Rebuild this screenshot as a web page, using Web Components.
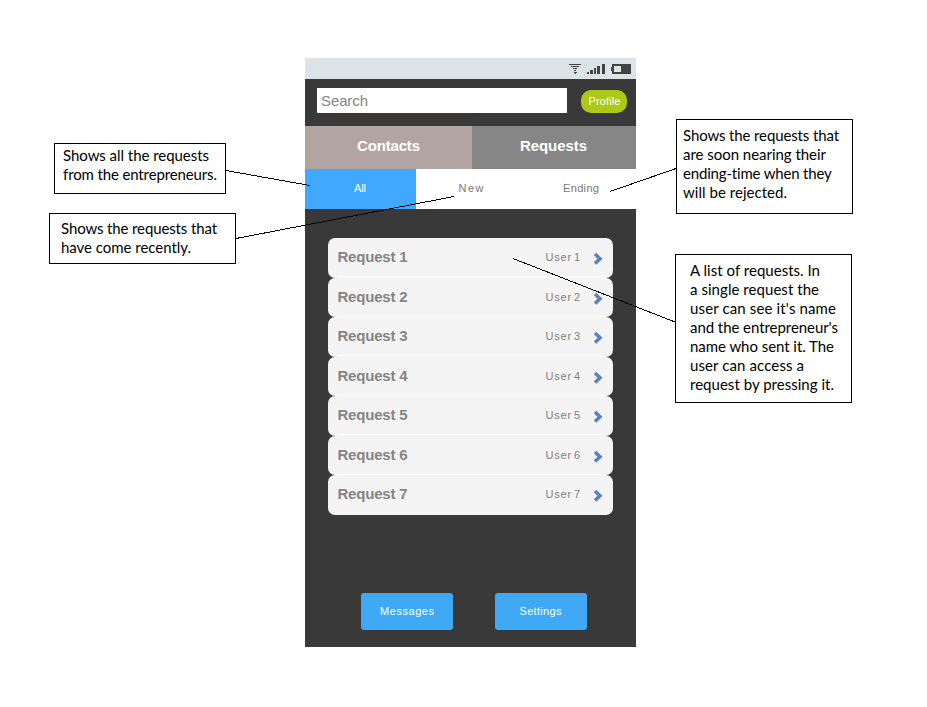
<!DOCTYPE html>
<html lang="en"><head><meta charset="utf-8"><title>Requests</title>
<style>html,body{margin:0;background:#fff}body{width:927px;height:707px;overflow:hidden;font-family:"Liberation Sans",Arial,sans-serif}</style></head>
<body>
<mock-board>
  <phone-screen>
    <status-bar></status-bar>
    <search-header></search-header>
    <main-tabs></main-tabs>
    <filter-tabs></filter-tabs>
    <request-list></request-list>
    <bottom-actions></bottom-actions>
  </phone-screen>
  <callout-note slot="note" style="left:54px;top:143px;width:172px;height:51px;padding:2px 0 0 8px"><fit-text w="146">Shows all the requests</fit-text><fit-text w="154">from the entrepreneurs.</fit-text></callout-note>
  <callout-note slot="note" style="left:49px;top:213px;width:187px;height:51px;padding:5px 0 0 11px"><fit-text w="156">Shows the requests that</fit-text><fit-text w="130">have come recently.</fit-text></callout-note>
  <callout-note slot="note" style="left:676px;top:119px;width:177px;height:95px;padding:6px 0 0 6px"><fit-text w="156">Shows the requests that</fit-text><fit-text w="143">are soon nearing their</fit-text><fit-text w="149">ending-time when they</fit-text><fit-text w="104">will be rejected.</fit-text></callout-note>
  <callout-note slot="note" style="left:675px;top:254px;width:177px;height:149px;padding:6px 0 0 14px"><fit-text w="130">A list of requests. In</fit-text><fit-text w="129">a single request the</fit-text><fit-text w="146">user can see it's name</fit-text><fit-text w="148">and the entrepreneur's</fit-text><fit-text w="144">name who sent it. The</fit-text><fit-text w="114">user can access a</fit-text><fit-text w="144">request by pressing it.</fit-text></callout-note>
</mock-board>
<script>
const define = (name, html, after) => customElements.define(name, class extends HTMLElement {
  constructor() {
    super();
    this.attachShadow({mode: 'open'}).innerHTML = html;
  }
  connectedCallback() { if (after) after(this); }
});

// One line of text, tracked so that it spans the width given in "w".
define('fit-text', `<style>:host{display:block;width:max-content;white-space:pre}span{display:inline-block}</style><span><slot></slot></span>`, el => {
  requestAnimationFrame(() => {
    const s = el.shadowRoot.querySelector('span');
    const n = el.textContent.length;
    const sp = (Number(el.getAttribute('w')) - s.getBoundingClientRect().width) / (n - 1);
    s.style.letterSpacing = sp.toFixed(3) + 'px';
    s.style.marginRight = (-sp).toFixed(3) + 'px';
  });
});

define('callout-note', `<style>:host{position:absolute;box-sizing:border-box;border:1px solid #000;background:#fff;color:#000;font:15px/19px Lato,Carlito,sans-serif}</style><slot></slot>`);

define('status-bar', `<style>:host{display:flex;height:21px;background:#dce4e7;justify-content:flex-end}svg{display:block}</style>
<svg width="71" height="21" fill="#434343" shape-rendering="crispEdges">
<path d="M4 6h12v1H4zM6 8h8v1H6zM8 10h4v1H8zM9 12h2v1H9z"/><path d="M9 14h3v1h-1v1h-1v-1H9z"/>
<path d="M22 14h2v2h-2zM25 12h3v4h-3zM29 10h2v6h-2zM32 8h3v8h-3zM36.5 6h3v10h-3z"/>
<path d="M47 6h19v10H47v-3h-1V9h1zM49 8v6h7V8z" fill-rule="evenodd"/></svg>`);

define('search-header', `<style>:host{display:flex;box-sizing:border-box;height:47px;padding:9px 9px 0 12px;justify-content:space-between}
.s{width:246px;height:25px;padding-left:4px;background:#fff;color:#858585;font-size:15px;line-height:25px}
.p{box-sizing:border-box;width:46px;height:23px;margin-top:2px;border-radius:10px;background:#adc917;color:#fff;font-size:11px;line-height:23px;padding-left:7.5px}</style>
<div class="s"><fit-text w="47">Search</fit-text></div><div class="p"><fit-text w="32">Profile</fit-text></div>`);

define('main-tabs', `<style>:host{display:grid;grid-template-columns:167px 164px;height:43px;color:#fff;font-weight:bold;font-size:15px;line-height:40px}
div{display:flex;justify-content:center}.a{background:#b3a4a4}.b{background:#868686;padding-right:1px}</style>
<div class="a"><fit-text w="63">Contacts</fit-text></div><div class="b"><fit-text w="67">Requests</fit-text></div>`);

define('filter-tabs', `<style>:host{display:grid;grid-template-columns:111px 110px 110px;height:40px;background:#fff;color:#777;font-size:11px;line-height:39px}
div{display:flex;justify-content:center}.a{background:#40a9ff;color:#fff;padding-right:1px}</style>
<div class="a"><fit-text w="12">All</fit-text></div><div><fit-text w="25">New</fit-text></div><div><fit-text w="36">Ending</fit-text></div>`);

define('request-row', `<style>:host{display:flex;box-sizing:border-box;height:39.571px;padding:0 9px 0 9.5px;border-radius:7px;background:#f4f4f4;color:#848484;justify-content:space-between;line-height:38.6px}
:host(:not(:last-child)){background:linear-gradient(#fcfcfc,#fcfcfc) 9px 100%/267px 1.5px no-repeat #f4f4f4}
.n{font-size:15px;font-weight:bold}.r{display:flex;font-size:11px;color:#7e7e7e}.r fit-text{word-spacing:-2px}svg{display:block;margin:14px 0 0 13px}</style>
<div class="n"><fit-text w="70"></fit-text></div><div class="r"><fit-text w="34.5"></fit-text><svg width="11" height="14" fill="none" stroke="#5b80bd" stroke-width="3.5"><path d="M2 2L7 6.8 2 11.6"/></svg></div>`, el => {
  const t = el.shadowRoot.querySelectorAll('fit-text');
  t[0].textContent = 'Request ' + el.getAttribute('n');
  t[1].textContent = 'User ' + el.getAttribute('n');
});

define('request-list', `<style>:host{display:flex;flex-direction:column;margin:29px 23px 0}</style>` + [1,2,3,4,5,6,7].map(n => `<request-row n="${n}"></request-row>`).join(''));

define('bottom-actions', `<style>:host{display:flex;gap:42px;margin:78px 0 0 56px}
div{width:92px;height:37px;border-radius:3px;background:#40a9f6;color:#fff;display:flex;justify-content:center;font-size:11px;line-height:36px}div:last-child{box-sizing:border-box;padding-right:1px}</style>
<div><fit-text w="54">Messages</fit-text></div><div><fit-text w="42">Settings</fit-text></div>`);

define('phone-screen', `<style>:host{display:flex;flex-direction:column;width:331px;height:589px;background:#393939}</style><slot></slot>`);

define('mock-board', `<style>:host{display:block;position:relative;box-sizing:border-box;width:927px;height:707px;padding:58px 0 0 305px}svg{position:absolute;left:0;top:0}</style>
<slot></slot><slot name="note"></slot>
<svg width="927" height="707" stroke="#000" stroke-width="1" shape-rendering="crispEdges"><path d="M226 170.5L310 185.5M236 238.5L454 196.5M676 168.5L610 191.5M675 322L513 258.5"/></svg>`);
</script>
</body></html>
